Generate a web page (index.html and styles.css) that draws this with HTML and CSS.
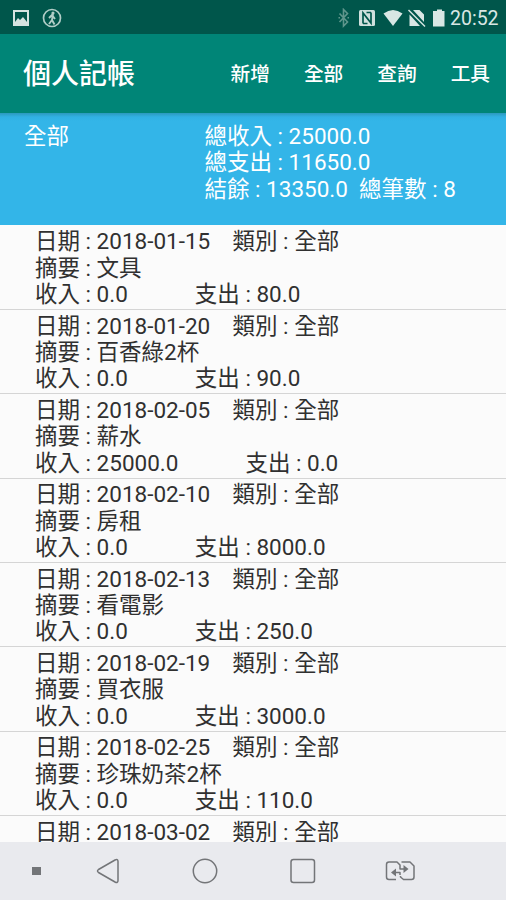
FILE: index.html
```html
<!DOCTYPE html>
<html lang="zh-Hant">
<head>
<meta charset="utf-8">
<title>個人記帳</title>
<link rel="stylesheet" href="styles.css">
</head>
<body>
<div class="screen">
  <header class="status">
    <svg class="status-left" width="50" height="20" viewBox="0 0 50 20">
      <path fill="#d5e4e1" fill-rule="evenodd" d="M1 2h16v16H1zM3 4v10l3-4 2 2 3-3 4 5V4z"/>
      <path fill="#d5e4e1" d="M3 14h12v3H3z"/>
      <circle cx="40" cy="10" r="8.500" fill="none" stroke="#b0cdc7" stroke-width="1.700"/>
      <circle cx="41" cy="5" r="1.600" fill="#b0cdc7"/>
      <path fill="none" stroke="#b0cdc7" stroke-width="1.900" d="M41 6l-1 6 2.500 4.500M40 12l-3 4M37 10l3-3 3 4"/>
    </svg>
    <svg class="status-right" width="110" height="20" viewBox="0 0 110 20">
      <path fill="none" stroke="#5f968c" stroke-width="1.600" d="M1.500 5.500l8 8.500-4 4V1.500l4 4-8 8.500M.5 9.800h1.500M9.500 9.800H11"/>
      <rect x="21" y="2" width="16" height="16" rx="1.500" fill="#cfe0dd"/>
      <path fill="none" stroke="#00564b" stroke-width="1.700" d="M25 15.500V5l8 10V4.500M28.500 4.500H33M25 15.500h4.500"/>
      <path fill="#d8e7e4" d="M45.500 5.500q9.500-7 19 0L55 18z"/>
      <path fill="#d8e7e4" d="M71.500 6.500L82 18H71.500zM75 2h6.500l4.500 4.500V14z"/>
      <path stroke="#d8e7e4" stroke-width="1.500" d="M70.500 2L87 18.500"/>
      <path fill="#d8e7e4" d="M97 3h2V1.500h5V3h2.500v15.500H95V3z"/>
    </svg>
    <span class="clock">20:52</span>
  </header>
  <nav class="appbar">
    <h1 class="title">個人記帳</h1>
    <div class="menu"><span>新增</span><span>全部</span><span>查詢</span><span>工具</span></div>
  </nav>
  <section class="summary">
    <div class="scope">全部</div>
    <div class="totals">總收入 : 25000.0
總支出 : 11650.0
結餘 : 13350.0  總筆數 : 8</div>
  </section>
  <main class="list">
    <div class="entry">日期 : 2018-01-15    類別 : 全部
摘要 : 文具
收入 : 0.0            支出 : 80.0</div>
    <div class="entry">日期 : 2018-01-20    類別 : 全部
摘要 : 百香綠2杯
收入 : 0.0            支出 : 90.0</div>
    <div class="entry">日期 : 2018-02-05    類別 : 全部
摘要 : 薪水
收入 : 25000.0            支出 : 0.0</div>
    <div class="entry">日期 : 2018-02-10    類別 : 全部
摘要 : 房租
收入 : 0.0            支出 : 8000.0</div>
    <div class="entry">日期 : 2018-02-13    類別 : 全部
摘要 : 看電影
收入 : 0.0            支出 : 250.0</div>
    <div class="entry">日期 : 2018-02-19    類別 : 全部
摘要 : 買衣服
收入 : 0.0            支出 : 3000.0</div>
    <div class="entry">日期 : 2018-02-25    類別 : 全部
摘要 : 珍珠奶茶2杯
收入 : 0.0            支出 : 110.0</div>
    <div class="entry">日期 : 2018-03-02    類別 : 全部</div>
  </main>
  <footer class="navbar">
    <svg width="506" height="58" viewBox="0 0 506 58" fill="none" stroke="#737578" stroke-width="1.500" stroke-linejoin="round">
      <rect x="32" y="25" width="9" height="8" fill="#737578" stroke="none"/>
      <path d="M98.500 27.500L115 18q3-1.500 3 1.500v19q0 3-3 1.500L98.500 30.500q-2-1.500 0-3z"/>
      <circle cx="205" cy="29" r="11.700"/>
      <rect x="291" y="17.500" width="23.500" height="23" rx="2.500"/>
      <path d="M400 24v-1l-3-3h-8q-2.500 0-2.500 2.500V35q0 2.500 2.500 2.500h7M400.500 34v1l3 2.500h8q2.500 0 2.500-2.500V24l-4-4h-8.500"/>
      <path d="M400 33v-2.500h-7M400 24v3h6"/>
      <path fill="#737578" stroke="none" d="M391 30.500l5-4v8zM408.500 27l-5-4v8z"/>
    </svg>
  </footer>
</div>
</body>
</html>
```
FILE: styles.css
```css
body {
  margin: 0;
  font-family: Roboto, "Noto Sans CJK TC", sans-serif;
}

.screen {
  display: flex;
  flex-direction: column;
  width: 506px;
  height: 900px;
  overflow: hidden;
  background: #fbfbfb;
}

.status {
  display: flex;
  align-items: center;
  flex: none;
  box-sizing: border-box;
  height: 34px;
  padding: 1px 8px 0 12px;
  background: #00564b;
}

.status-right {
  margin-left: auto;
}

.clock {
  width: 48px;
  margin-left: 2px;
  padding-top: 2px;
  color: #d8e7e4;
  font-size: 19.5px;
  line-height: 32px;
  white-space: nowrap;
}

.appbar {
  display: flex;
  align-items: center;
  justify-content: space-between;
  flex: none;
  box-sizing: border-box;
  height: 79px;
  padding: 3px 16px 0 23px;
  background: #008577;
  color: #fff;
}

.title {
  margin: 0;
  font-size: 28px;
  font-weight: 500;
  line-height: 40px;
}

.menu {
  display: flex;
  gap: 34px;
  font-size: 19.7px;
  font-weight: 500;
  line-height: 40px;
}

.summary {
  display: flex;
  flex: none;
  box-sizing: border-box;
  height: 112px;
  padding: 10px 0 0 24px;
  background: linear-gradient(#2b99bd, #31b1e3 4px, #33b5e8 8px);
  color: #fff;
  font-size: 22.5px;
  line-height: 26.4px;
  white-space: pre;
}

.scope {
  width: 180.5px;
}

.list {
  flex: 1;
  min-height: 0;
  padding-top: 0.7px;
  overflow: hidden;
}

.entry {
  box-sizing: border-box;
  height: 84.35px;
  padding: 2.6px 0 0 35px;
  border-bottom: 1px solid #d5d5d5;
  color: #303030;
  font-size: 22.5px;
  line-height: 26.4px;
  white-space: pre;
}

.navbar {
  flex: none;
  height: 58px;
  background: #e9eaee;
}

.navbar svg {
  display: block;
}
```
